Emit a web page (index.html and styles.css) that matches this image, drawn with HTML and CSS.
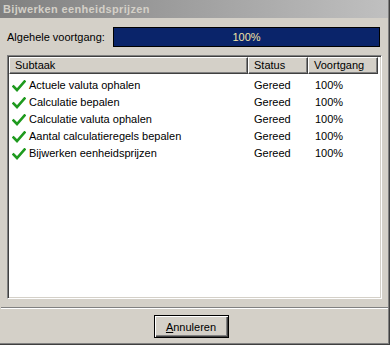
FILE: index.html
```html
<!DOCTYPE html>
<html>
<head>
<meta charset="utf-8">
<link rel="stylesheet" href="styles.css">
</head>
<body>
<div class="window">
  <div class="titlebar">Bijwerken eenheidsprijzen</div>
  <div class="content">
    <div class="progress-row">
      <span class="label">Algehele voortgang:</span>
      <div class="bar">100%</div>
    </div>
    <div class="list">
      <div class="header">
        <div class="hcell c1">Subtaak</div>
        <div class="hcell c2">Status</div>
        <div class="hcell c3">Voortgang</div>
      </div>
      <div class="rows">
        <div class="row"><div class="cell c1"><svg class="check" width="14" height="12" viewBox="0 0 14 12"><path d="M1.5 6.5 L5 10 L12.5 1.5" fill="none" stroke="#1e9a1e" stroke-width="2.6" stroke-linejoin="miter" stroke-linecap="square"/></svg>Actuele valuta ophalen</div><div class="cell c2">Gereed</div><div class="cell c3">100%</div></div>
        <div class="row"><div class="cell c1"><svg class="check" width="14" height="12" viewBox="0 0 14 12"><path d="M1.5 6.5 L5 10 L12.5 1.5" fill="none" stroke="#1e9a1e" stroke-width="2.6" stroke-linejoin="miter" stroke-linecap="square"/></svg>Calculatie bepalen</div><div class="cell c2">Gereed</div><div class="cell c3">100%</div></div>
        <div class="row"><div class="cell c1"><svg class="check" width="14" height="12" viewBox="0 0 14 12"><path d="M1.5 6.5 L5 10 L12.5 1.5" fill="none" stroke="#1e9a1e" stroke-width="2.6" stroke-linejoin="miter" stroke-linecap="square"/></svg>Calculatie valuta ophalen</div><div class="cell c2">Gereed</div><div class="cell c3">100%</div></div>
        <div class="row"><div class="cell c1"><svg class="check" width="14" height="12" viewBox="0 0 14 12"><path d="M1.5 6.5 L5 10 L12.5 1.5" fill="none" stroke="#1e9a1e" stroke-width="2.6" stroke-linejoin="miter" stroke-linecap="square"/></svg>Aantal calculatieregels bepalen</div><div class="cell c2">Gereed</div><div class="cell c3">100%</div></div>
        <div class="row"><div class="cell c1"><svg class="check" width="14" height="12" viewBox="0 0 14 12"><path d="M1.5 6.5 L5 10 L12.5 1.5" fill="none" stroke="#1e9a1e" stroke-width="2.6" stroke-linejoin="miter" stroke-linecap="square"/></svg>Bijwerken eenheidsprijzen</div><div class="cell c2">Gereed</div><div class="cell c3">100%</div></div>
      </div>
    </div>
    <div class="sep"></div>
    <div class="footer">
      <button class="btn"><span class="u">A</span>nnuleren</button>
    </div>
  </div>
</div>
</body>
</html>
```
FILE: styles.css
```css
html, body {
  margin: 0;
  padding: 0;
  background: #d4d0c8;
}
body {
  font-family: "Liberation Sans", Arial, sans-serif;
  font-size: 11px;
  color: #000;
}
.window {
  width: 390px;
  height: 345px;
  box-sizing: border-box;
  background: #d4d0c8;
  border-right: 1px solid #404040;
  border-bottom: 1px solid #404040;
  display: flex;
  flex-direction: column;
}
.titlebar {
  height: 18px;
  line-height: 18px;
  padding-left: 3px;
  font-weight: bold;
  letter-spacing: 0.35px;
  color: #d4d0c8;
  background: linear-gradient(to right, #808080, #c0c0c0);
  border-right: 1px solid #808080;
}
.content {
  flex: 1;
  display: flex;
  flex-direction: column;
  border-right: 1px solid #808080;
  border-bottom: 1px solid #808080;
}
.progress-row {
  display: flex;
  align-items: center;
  margin: 9px 8px 0 7px;
  height: 20px;
}
.label {
  width: 106px;
}
.bar {
  flex: 1;
  height: 20px;
  box-sizing: border-box;
  border: 1px solid #000;
  background: #0a246a;
  color: #f3e3a6;
  text-align: center;
  line-height: 18px;
}
.list {
  margin: 8px 6px 0 7px;
  height: 244px;
  box-sizing: border-box;
  border-top: 1px solid #808080;
  border-left: 1px solid #808080;
  border-right: 1px solid #fff;
  border-bottom: 1px solid #fff;
  box-shadow: inset 1px 1px 0 #404040, inset -1px -1px 0 #d4d0c8;
  padding: 1px;
  display: flex;
  flex-direction: column;
}
.header {
  display: flex;
  height: 17px;
  background: #fff;
}
.hcell {
  box-sizing: border-box;
  height: 17px;
  line-height: 15px;
  padding-left: 5px;
  background: #d4d0c8;
  border-top: 1px solid #fff;
  border-left: 1px solid #fff;
  border-right: 1px solid #404040;
  border-bottom: 1px solid #404040;
  box-shadow: inset -1px -1px 0 #808080;
}
.c1 { width: 239px; }
.c2 { width: 60px; }
.c3 { width: 70px; }
.rows {
  flex: 1;
  background: #fff;
  padding-top: 3px;
}
.row {
  display: flex;
  height: 17px;
  line-height: 17px;
}
.cell {
  box-sizing: border-box;
  white-space: nowrap;
}
.row .c1 {
  display: flex;
  align-items: center;
  padding-left: 3px;
}
.row .c2 { padding-left: 6px; }
.row .c3 { padding-left: 7px; }
.check {
  margin-right: 3px;
}
.sep {
  margin: 8px 0 0 1px;
  height: 1px;
  background: #808080;
  border-bottom: 1px solid #fff;
}
.footer {
  display: flex;
  justify-content: center;
  padding-top: 6px;
  padding-right: 6px;
}
.btn {
  width: 75px;
  height: 23px;
  box-sizing: border-box;
  font-family: "Liberation Sans", Arial, sans-serif;
  font-size: 11px;
  color: #000;
  background: #d4d0c8;
  border: 1px solid #000;
  box-shadow: inset 1px 1px 0 #fff, inset -1px -1px 0 #404040, inset -2px -2px 0 #808080;
  padding: 0;
}
.u { text-decoration: underline; }
```
